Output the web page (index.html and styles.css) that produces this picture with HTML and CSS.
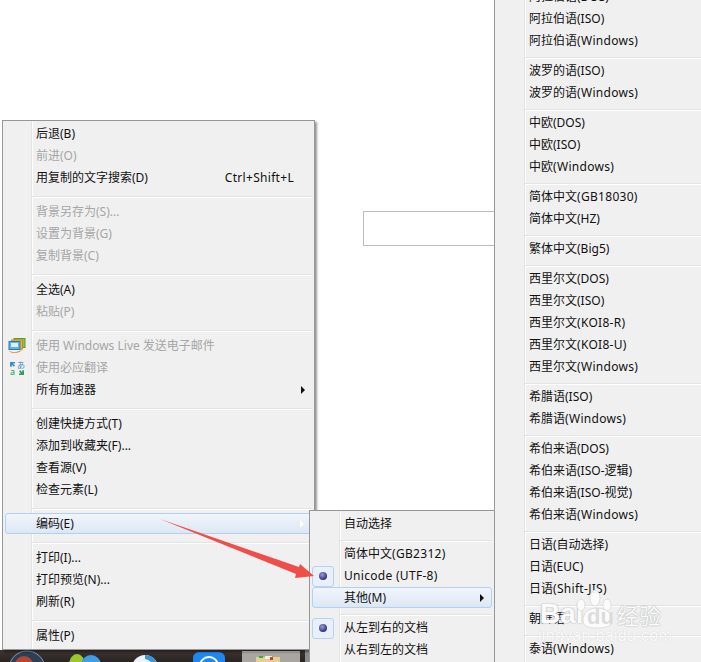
FILE: index.html
```html
<!DOCTYPE html>
<html lang="zh-CN">
<head>
<meta charset="utf-8">
<title>编码菜单</title>
<link rel="stylesheet" href="styles.css">
</head>
<body>
<div class="desktop">
  <div class="searchbox"></div>

  <div class="taskbar">
    <svg class="taskbar-art" width="310" height="12" viewBox="0 0 310 12" aria-hidden="true">
      <circle cx="27" cy="19" r="18" fill="#2b3f55" stroke="#7f9db5" stroke-width="1"/>
      <circle cx="24" cy="15" r="9" fill="#b5482c"/>
      <ellipse cx="77" cy="15" rx="8" ry="11" fill="#9cc62c"/>
      <circle cx="91" cy="15" r="10" fill="#3f9ee8"/>
      <circle cx="145" cy="18" r="13" fill="#e8f3fb"/>
      <path d="M145 5a13 13 0 0 1 12 8l-5 1a9 9 0 0 0-7-5z" fill="#3a94d8"/>
      <rect x="193" y="2" width="32" height="22" rx="6" fill="#1e88f0"/>
      <circle cx="209" cy="16" r="9" fill="none" stroke="#fff" stroke-width="2"/>
      <rect x="242" y="1" width="58" height="13" rx="2" fill="#a9a5a0"/>
      <rect x="242" y="1" width="58" height="1" fill="#cfcbc6"/>
      <rect x="256" y="7" width="24" height="7" fill="#e3cf8e"/>
      <rect x="259" y="6" width="4" height="2" fill="#2cb34a"/>
      <rect x="265" y="6" width="7" height="3" fill="#f5f1e8"/>
      <rect x="270" y="7" width="3" height="3" fill="#c8402e"/>
      <rect x="305" y="0" width="5" height="12" fill="#8b8b8b"/>
    </svg>
  </div>

  <div class="menu menu-main">
    <div class="item">后退(B)</div>
    <div class="item dis">前进(O)</div>
    <div class="item">用复制的文字搜索(D)<span class="shortcut la">Ctrl+Shift+L</span></div>
    <div class="sep"></div>
    <div class="item dis">背景另存为(S)...</div>
    <div class="item dis">设置为背景(G)</div>
    <div class="item dis">复制背景(C)</div>
    <div class="sep"></div>
    <div class="item">全选(A)</div>
    <div class="item dis">粘贴(P)</div>
    <div class="sep"></div>
    <div class="item dis has">
      <span class="slot">
        <svg width="18" height="16" viewBox="0 0 18 16" aria-hidden="true">
          <rect x="6" y="0.5" width="11" height="9" fill="#8cc63f" stroke="#5f9a2a"/>
          <rect x="3.500" y="2" width="11" height="9" fill="#f2b632" stroke="#c78a1e"/>
          <rect x="1" y="3.500" width="11" height="8" fill="#5bb4ee" stroke="#2b78b8"/>
          <rect x="3" y="5" width="7" height="4" fill="#d7effc"/>
          <path d="M0.500 12c3 3 9 3 14-1-2 4.500-11 6-14 1z" fill="#f08a1d"/>
        </svg>
      </span>使用 Windows Live 发送电子邮件
    </div>
    <div class="item dis has">
      <span class="slot">
        <svg width="18" height="18" viewBox="0 0 18 18" aria-hidden="true">
          <path d="M2 3h5v1.500l-2 0 2 2-1.200 1.200-2-2v2H2z" fill="#3b8ec9"/>
          <text x="9" y="9" class="glyph glyph-blue">あ</text>
          <text x="2" y="16" class="glyph glyph-green">a</text>
          <path d="M16 16h-5v-1.500l2 0-2-2 1.200-1.200 2 2v-2H16z" fill="#2f9d58"/>
        </svg>
      </span>使用必应翻译
    </div>
    <div class="item">所有加速器<span class="tri"></span></div>
    <div class="sep"></div>
    <div class="item">创建快捷方式(T)</div>
    <div class="item">添加到收藏夹(F)...</div>
    <div class="item">查看源(V)</div>
    <div class="item">检查元素(L)</div>
    <div class="sep"></div>
    <div class="item hl">编码(E)<span class="tri tri-light"></span></div>
    <div class="sep"></div>
    <div class="item">打印(I)...</div>
    <div class="item">打印预览(N)...</div>
    <div class="item">刷新(R)</div>
    <div class="sep"></div>
    <div class="item">属性(P)</div>
  </div>

  <div class="menu menu-encoding">
    <div class="item">自动选择</div>
    <div class="sep"></div>
    <div class="item">简体中文<span class="la">(GB2312)</span></div>
    <div class="item has"><span class="slot checked"><span class="dot"></span></span><span class="la">Unicode (UTF-8)</span></div>
    <div class="item hl">其他(M)<span class="tri"></span></div>
    <div class="sep"></div>
    <div class="item has"><span class="slot checked"><span class="dot"></span></span>从左到右的文档</div>
    <div class="item">从右到左的文档</div>
  </div>

  <div class="menu menu-other">
    <div class="item">阿拉伯语(DOS)</div>
    <div class="item">阿拉伯语(ISO)</div>
    <div class="item">阿拉伯语<span class="la">(Windows)</span></div>
    <div class="sep"></div>
    <div class="item">波罗的语(ISO)</div>
    <div class="item">波罗的语<span class="la">(Windows)</span></div>
    <div class="sep"></div>
    <div class="item">中欧(DOS)</div>
    <div class="item">中欧(ISO)</div>
    <div class="item">中欧<span class="la">(Windows)</span></div>
    <div class="sep"></div>
    <div class="item">简体中文<span class="la">(GB18030)</span></div>
    <div class="item">简体中文(HZ)</div>
    <div class="sep"></div>
    <div class="item">繁体中文(Big5)</div>
    <div class="sep"></div>
    <div class="item">西里尔文(DOS)</div>
    <div class="item">西里尔文(ISO)</div>
    <div class="item">西里尔文<span class="la">(KOI8-R)</span></div>
    <div class="item">西里尔文<span class="la">(KOI8-U)</span></div>
    <div class="item">西里尔文<span class="la">(Windows)</span></div>
    <div class="sep"></div>
    <div class="item">希腊语(ISO)</div>
    <div class="item">希腊语<span class="la">(Windows)</span></div>
    <div class="sep"></div>
    <div class="item">希伯来语(DOS)</div>
    <div class="item">希伯来语(ISO-逻辑)</div>
    <div class="item">希伯来语(ISO-视觉)</div>
    <div class="item">希伯来语<span class="la">(Windows)</span></div>
    <div class="sep"></div>
    <div class="item">日语(自动选择)</div>
    <div class="item">日语(EUC)</div>
    <div class="item">日语<span class="la">(Shift-JIS)</span></div>
    <div class="sep"></div>
    <div class="item">朝鲜语</div>
    <div class="sep"></div>
    <div class="item">泰语<span class="la">(Windows)</span></div>
  </div>

  <svg class="arrow" width="160" height="62" viewBox="160 519 160 62" aria-hidden="true">
    <polygon points="160,519 299,567 300,564 314,576 295,578 296,574" fill="#ee4f4b"/>
  </svg>

  <div class="watermark">
    <span class="wm-bai">Bai</span>
    <svg class="paw" width="48" height="44" viewBox="0 0 48 44" aria-hidden="true">
      <ellipse cx="11" cy="17" rx="4" ry="6"/>
      <ellipse cx="25" cy="10" rx="5" ry="8"/>
      <ellipse cx="37" cy="17" rx="4" ry="6"/>
      <path d="M13 32c0-7 6-12 14-12s15 5 15 12c0 6-5 8-15 8s-14-2-14-8z"/>
    </svg>
    <span class="wm-du">du</span>
    <span class="wm-cn">经验</span>
    <span class="wm-url">jingyan.baidu.com</span>
  </div>
</div>
</body>
</html>
```
FILE: styles.css
```css
html, body {
  margin: 0;
  padding: 0;
  background: #fff;
}

.desktop {
  position: relative;
  width: 701px;
  height: 662px;
  overflow: hidden;
  background: #fff;
  font-family: "Noto Sans", "Noto Sans CJK SC", sans-serif;
  font-size: 12px;
  color: #111;
}

.searchbox {
  position: absolute;
  left: 363px;
  top: 211px;
  width: 140px;
  height: 33px;
  border: 1px solid #bdbdbd;
}

.taskbar {
  position: absolute;
  left: 0;
  top: 650px;
  width: 310px;
  height: 12px;
  background: linear-gradient(#3e3431, #2a2422);
}

.taskbar-art {
  display: block;
}

.menu {
  position: absolute;
  box-sizing: border-box;
  border: 1px solid #979797;
  background: #f0f0f0;
  box-shadow: 2px 2px 2px rgba(0, 0, 0, 0.4);
  padding: 2px 0;
}

.menu::before {
  content: "";
  position: absolute;
  top: 0;
  bottom: 0;
  left: 29px;
  width: 1px;
  background: #e2e3e3;
  border-right: 1px solid #fff;
}

.menu-main {
  left: 2px;
  top: 120px;
  width: 313px;
  height: 530px;
}

.menu-main::before {
  left: 28px;
}

.menu-encoding {
  left: 309px;
  top: 510px;
  width: 186px;
  height: 170px;
}

.menu-other {
  left: 494px;
  top: -17px;
  width: 230px;
  height: 700px;
}

.item {
  position: relative;
  display: flex;
  align-items: center;
  box-sizing: border-box;
  height: 22px;
  margin: 0 2px;
  padding-left: 32px;
  white-space: nowrap;
  line-height: 22px;
}

.menu-main .item {
  padding-left: 31px;
}

.menu .item.has {
  padding-left: 0;
}

.la {
  letter-spacing: 0.3px;
}

.slot {
  display: flex;
  align-items: center;
  justify-content: center;
  box-sizing: border-box;
  flex: none;
  width: 22px;
  height: 21px;
  margin-right: 10px;
}

.menu-main .slot {
  width: 24px;
  margin-right: 7px;
}

.checked {
  border: 1px solid #b5d3f5;
  border-radius: 3px;
  background: #eaf0f9;
}

.dot {
  width: 8px;
  height: 8px;
  border-radius: 50%;
  background: radial-gradient(circle at 40% 35%, #9a9ad8, #2c2c78 75%);
}

.dis {
  color: #a6a6a6;
}

.hl {
  height: 21px;
  margin-bottom: 1px;
  border: 1px solid #b2d0f4;
  border-radius: 3px;
  background: linear-gradient(#f1f5fb, #dde7f4);
}

.menu-main .hl {
  padding-left: 30px;
}

.menu-encoding .hl {
  padding-left: 31px;
}

.sep {
  box-sizing: border-box;
  position: relative;
  height: 12px;
  padding-top: 7px;
  margin: 0 2px 0 29px;
}

.sep::after {
  content: "";
  display: block;
  height: 1px;
  background: #e2e3e3;
  border-bottom: 1px solid #fff;
}

.menu-encoding .sep,
.menu-other .sep {
  height: 8px;
  padding-top: 5px;
  margin-left: 30px;
}

.shortcut {
  margin-left: auto;
  padding-right: 18px;
}

.tri {
  margin-left: auto;
  margin-right: 7px;
  width: 0;
  height: 0;
  border-left: 4px solid #111;
  border-top: 4px solid transparent;
  border-bottom: 4px solid transparent;
}

.tri-light {
  border-left-color: #fff;
}

.glyph {
  font-family: "Noto Sans CJK JP", sans-serif;
  font-size: 8px;
}

.glyph-blue {
  fill: #3b8ec9;
}

.glyph-green {
  fill: #2f9d58;
  font-size: 9px;
}

.arrow {
  position: absolute;
  left: 160px;
  top: 519px;
}

.watermark {
  position: absolute;
  left: 536px;
  top: 586px;
  width: 130px;
  height: 66px;
  color: #fbfbfb;
  text-shadow: 0 0 1px #a8a8a8, 0 0 2px #c4c4c4;
  font-family: "Liberation Sans", "Noto Sans CJK SC", sans-serif;
}

.paw {
  position: absolute;
  left: 34px;
  top: 2px;
  fill: rgba(252, 252, 252, 0.92);
  stroke: #cfcfcf;
  stroke-width: 0.6;
}

.wm-bai {
  position: absolute;
  left: 4px;
  top: 13px;
  font-size: 28px;
  line-height: 30px;
  font-weight: 700;
}

.wm-du {
  position: absolute;
  left: 51px;
  top: 19px;
  font-size: 22px;
  line-height: 24px;
  font-weight: 700;
  color: #dcdcdc;
  text-shadow: none;
}

.wm-cn {
  position: absolute;
  left: 81px;
  top: 18px;
  font-size: 22px;
  line-height: 26px;
}

.wm-url {
  position: absolute;
  left: 2px;
  top: 41px;
  font-size: 16px;
  line-height: 18px;
  letter-spacing: 0.3px;
  text-shadow: 0 0 1px #c8c8c8;
}
```
